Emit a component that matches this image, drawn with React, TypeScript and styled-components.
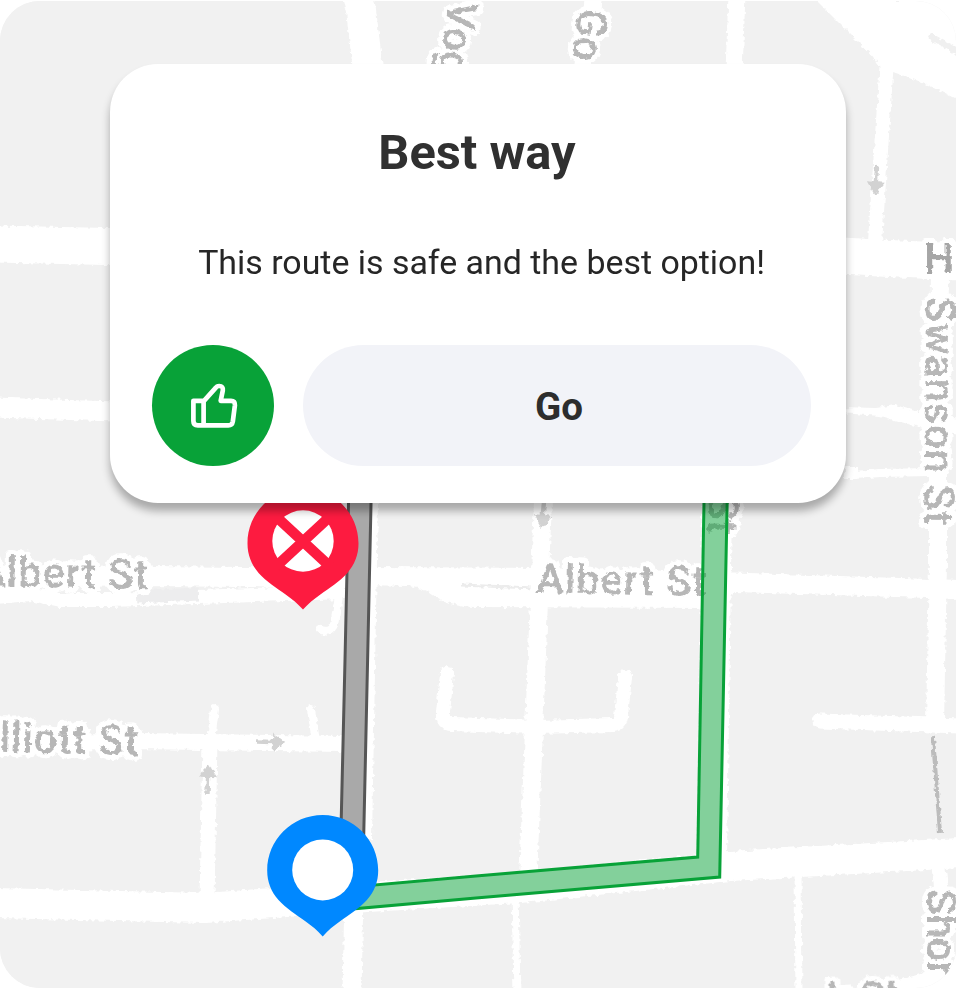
import React from "react";
import styled, { createGlobalStyle } from "styled-components";

const GlobalStyle = createGlobalStyle`
  *, *::before, *::after { box-sizing: border-box; }
  body { margin: 0; background: #fff; font-family: Roboto, "Liberation Sans", sans-serif; }
`;

const Screen = styled.main`
  position: relative;
  width: 956px;
  height: 989px;
  padding: 64px 110px 0;
  overflow: hidden;
  background: #fff;
`;

const MapCanvas = styled.svg`
  position: absolute;
  top: 1px;
  left: 0;
  width: 956px;
  height: 987px;
  border-radius: 40px;
  background: #f1f1f1;
`;

const Road = styled.path<{ $w: number; $cap?: string }>`
  fill: none;
  stroke: #fff;
  stroke-width: ${(p) => p.$w}px;
  stroke-linecap: ${(p) => p.$cap ?? "butt"};
  stroke-linejoin: round;
`;

const Area = styled.path`
  fill: #fff;
`;

const Detail = styled.path<{ $w: number; $color?: string }>`
  fill: none;
  stroke: ${(p) => p.$color ?? "#ececec"};
  stroke-width: ${(p) => p.$w}px;
`;

const StreetName = styled.text<{ $color?: string }>`
  font-family: Roboto, sans-serif;
  font-size: 42px;
  font-weight: 500;
  fill: ${(p) => p.$color ?? "#b7b7b7"};
  stroke: #fff;
  stroke-width: 10px;
  stroke-linejoin: round;
  paint-order: stroke;
`;

const Card = styled.section`
  position: relative;
  display: flex;
  flex-direction: column;
  align-items: center;
  width: 736px;
  height: 439px;
  padding: 60px 35px 37px 42px;
  border-radius: 48px;
  background: #fff;
  box-shadow: 0 8px 9px rgba(0, 0, 0, 0.3);
`;

const Title = styled.h1`
  margin: 0 9px 0 0;
  font-size: 48.8px;
  line-height: 58px;
  font-weight: 700;
  color: #303030;
  white-space: nowrap;
`;

const Message = styled.p`
  margin: 61px 0 0;
  font-size: 33.9px;
  line-height: 40px;
  color: #262626;
  white-space: nowrap;
`;

const Actions = styled.div`
  display: flex;
  gap: 29px;
  width: 100%;
  margin-top: auto;
`;

const LikeButton = styled.button`
  display: grid;
  place-items: center;
  flex: none;
  width: 122px;
  height: 121px;
  padding: 0;
  border: 0;
  border-radius: 50%;
  background: #08a238;
`;

const GoButton = styled.button`
  flex: 1;
  height: 121px;
  padding: 2px 0 0 4px;
  border: 0;
  border-radius: 61px;
  background: #f2f3f8;
  font-family: inherit;
  font-size: 38.5px;
  font-weight: 700;
  color: #2d2d2d;
`;

function ThumbIcon() {
  return (
    <svg width="50" height="50" viewBox="188 381 50 50" fill="none" stroke="#fff" strokeWidth="4.7" strokeLinejoin="round">
      <path d="M204 400.8H193.4V421Q193.4 425.4 197.8 425.4H228.4Q232.1 425.4 232.8 421.6L234.9 405.2Q235.2 400.8 231 400.8H220.7L222.8 390.5Q223.4 386 219.2 386Q216.8 386 215.2 388.4L204 400.8" />
      <path d="M203.6 400.8V425.4" />
    </svg>
  );
}

function PinShape({ color }: { color: string }) {
  return (
    <path
      fill={color}
      d="M0 -121.4C30.7 -121.4 55.5 -96.6 55.5 -66C55.5 -54.5 51.7 -45.3 44.2 -36.3C36.7 -27.8 25.7 -21.3 17.7 -15.3C10.7 -10.3 5.2 -5.8 0 0C-5.2 -5.8 -10.7 -10.3 -17.7 -15.3C-25.7 -21.3 -36.7 -27.8 -44.2 -36.3C-51.7 -45.3 -55.5 -54.5 -55.5 -66C-55.5 -96.6 -30.7 -121.4 0 -121.4Z"
    />
  );
}

function Arrow({ x, y, angle }: { x: number; y: number; angle: number }) {
  return (
    <path
      transform={`translate(${x} ${y}) rotate(${angle})`}
      fill="#d2d2d2"
      d="M-15 -2.2H2V-9L15 0L2 9V2.2H-15Z"
    />
  );
}

function StreetMap() {
  return (
    <MapCanvas viewBox="0 1 956 987">
      <defs>
        <filter id="rough" x="0" y="0" width="956" height="989" filterUnits="userSpaceOnUse" colorInterpolationFilters="sRGB">
          <feTurbulence type="fractalNoise" baseFrequency="0.26" numOctaves="1" seed="7" result="grain" />
          <feDisplacementMap in="SourceGraphic" in2="grain" scale="6" xChannelSelector="R" yChannelSelector="G" />
          <feGaussianBlur stdDeviation="0.5" />
        </filter>
      </defs>

      <g filter="url(#rough)">
        <rect x="-10" y="-10" width="976" height="1009" fill="#f1f1f1" />
        <Road $w={37} d="M-5 244L130 247M840 256L960 262" />
        <Road $w={30} d="M356 -10L361 10L368 70" />
        <Road $w={17} d="M737 -5L734 70" />
        <Road $w={17} d="M594 -5L582 70" />
        <Area d="M816 0L862 46Q878 60 880 68L893 72Q924 82 958 100V0Z" />
        <Detail $w={6} $color="#f0f0f0" d="M929 36L960 53" />
        <Road $w={14} d="M887 60L875 242" />
        <Road $w={20} d="M-5 407.5L115 411.5" />
        <Area d="M840 407L876 408L895 405L930 415L960 419V434L922 428L880 416L840 413Z" />
        <Road $w={8} d="M855 475L880 473L930 472" />
        <Road $w={12} d="M845 473L858 473" />
        <Road $w={18} d="M940 270L938 450L938 560L935 725" />
        <Detail $w={4} $color="#bcbcbc" d="M933 737L940 833" />
        <Road $w={14} d="M938 865L943 900" />

        <Road $w={20} d="M-5 578L150 576L350 578" />
        <Road $w={14} d="M-5 597L30 594L60 600L110 600L345 592" />
        <Detail $w={13} $color="#ededee" d="M137 597L198 594" />
        <Road $w={8} $cap="round" d="M339 596L334 625Q330 634 320 629" />
        <Area d="M365 567L540 568L720 572L960 580V599L735 592L710 608L476 607Q448 606 430 593Q422 588 408 586L365 585Z" />
        <Detail $w={3} d="M462 585L535 588" />
        <Road $w={18} d="M543 500L539 600L536 680L528 880" />
        <Road $w={14} $cap="round" d="M447 673L443 712Q442 724 452 724L536 727L612 725Q620 725 621 717L625 677" />
        <Road $w={16} d="M-5 745L140 741L345 744" />
        <Road $w={8} $cap="round" d="M215 709L211 740M311 709L315 735" />
        <Road $w={15} d="M210 740L207 900" />
        <Road $w={15} $cap="round" d="M820 721L960 726" />

        <Road $w={30} d="M-5 903L120 906L205 908L300 901L520 888L730 866L960 853" />
        <Road $w={30} d="M363 500L357 840" />
        <Road $w={19} d="M354 890L352 995" />
        <Road $w={30} d="M717 500L712 860" />
        <Road $w={7} d="M515 890L517 995M798 870L799 995" />
        <Area d="M780 995Q890 990 960 960V995Z" />

        <Arrow x={876} y={180} angle={95} />
        <Arrow x={543} y={513} angle={95} />
        <Arrow x={271} y={742} angle={2} />
        <Arrow x={208} y={779} angle={-88} />

        <StreetName transform="translate(449 0) rotate(98)">Vogel</StreetName>
        <StreetName transform="translate(579 7) rotate(98)">Go</StreetName>
        <StreetName $color="#a6a6a6" transform="translate(924 273)">H</StreetName>
        <StreetName transform="translate(926 297) rotate(90.4)" textLength="228">Swanson St</StreetName>
        <StreetName transform="translate(927 889) rotate(90)">Shor</StreetName>
        <StreetName transform="translate(829 1014) rotate(-4)">k St</StreetName>
        <StreetName transform="translate(709 494) rotate(92)">St</StreetName>
        <StreetName transform="translate(-22 586) rotate(1)" textLength="170">Albert St</StreetName>
        <StreetName transform="translate(536 593) rotate(1)" textLength="170">Albert St</StreetName>
        <StreetName transform="translate(-25 751) rotate(1.5)" textLength="163">Elliott St</StreetName>
      </g>

      <path d="M348.8 490L345 660L340.5 850H363.4L367.6 660L371.3 490Z" fill="#a9a9a9" stroke="#555" strokeWidth="3" />
      <path
        d="M704.2 490L697.7 857L476 876L340 888V910L476 898L719.7 877L727.4 490Z"
        fill="#08a238"
        fillOpacity="0.5"
        stroke="#08a238"
        strokeWidth="3"
      />

      <g transform="translate(303 609.5)">
        <PinShape color="#fd1b40" />
        <circle cy="-68.5" r="30.7" fill="#fff" />
        <path d="M-27 -93L27 -43M27 -93L-27 -43" stroke="#fd1b40" strokeWidth="10.5" />
      </g>
      <g transform="translate(322.7 936.4)">
        <PinShape color="#0088ff" />
        <circle cy="-66.5" r="30.5" fill="#fff" />
      </g>
    </MapCanvas>
  );
}

export default function App() {
  return (
    <>
      <GlobalStyle />
      <Screen>
        <StreetMap />
        <Card>
          <Title>Best way</Title>
          <Message>This route is safe and the best option!</Message>
          <Actions>
            <LikeButton aria-label="Like">
              <ThumbIcon />
            </LikeButton>
            <GoButton>Go</GoButton>
          </Actions>
        </Card>
      </Screen>
    </>
  );
}
